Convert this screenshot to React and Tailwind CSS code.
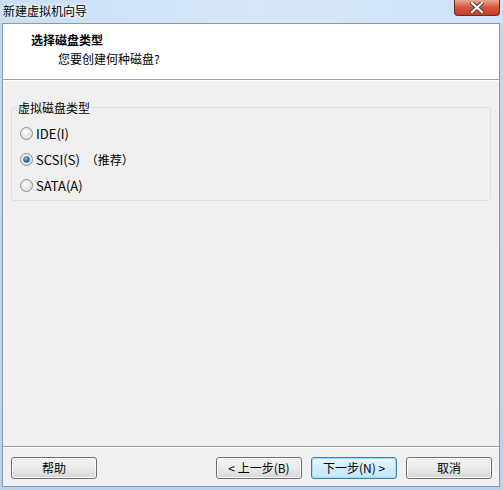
import React from "react";

const font = { fontFamily: '"Noto Sans CJK SC", "Liberation Sans", sans-serif' };

function Radio({ checked }) {
  return (
    <svg width="13" height="13" viewBox="0 0 13 13" className="shrink-0">
      <defs>
        <radialGradient id={checked ? "rc" : "ru"} cx="0.4" cy="0.35" r="0.7">
          <stop offset="0" stopColor="#ffffff" />
          <stop offset="1" stopColor="#d6d6d6" />
        </radialGradient>
        <radialGradient id="dot" cx="0.4" cy="0.35" r="0.7">
          <stop offset="0" stopColor="#8fd3f5" />
          <stop offset="0.6" stopColor="#1b74b0" />
          <stop offset="1" stopColor="#0f4f85" />
        </radialGradient>
      </defs>
      <circle cx="6.5" cy="6.5" r="6" fill={`url(#${checked ? "rc" : "ru"})`} stroke="#8f8f8f" strokeWidth="1" />
      <circle cx="6.5" cy="6.5" r="4.3" fill="none" stroke="#e8e8e8" strokeWidth="0.8" />
      {checked && <circle cx="6.5" cy="6.5" r="3" fill="url(#dot)" stroke="#2a5d84" strokeWidth="0.5" />}
    </svg>
  );
}

function Btn({ children, focused }) {
  return (
    <div
      className={`w-[86px] h-[22px] rounded-[3px] border flex items-center justify-center text-[12px] text-black ${
        focused
          ? "border-[#3c7fb1] bg-gradient-to-b from-[#eaf6fd] to-[#bee6fd] shadow-[inset_0_0_0_1px_#a7d9f5]"
          : "border-[#707070] bg-gradient-to-b from-[#f2f2f2] via-[#ebebeb] to-[#d5d5d5] shadow-[inset_0_0_0_1px_#fcfcfc]"
      }`}
    >
      {children}
    </div>
  );
}

export default function App() {
  return (
    <div
      className="w-[503px] h-[490px] flex flex-col bg-gradient-to-b from-[#c2d8ef] to-[#b9d1ea] overflow-hidden"
      style={font}
    >
      {/* title bar */}
      <div className="h-[23px] flex items-start justify-between bg-gradient-to-r from-[#c9def4] via-[#d6e6f8] to-[#cfe2f6]">
        <div className="pl-[3px] pt-[3px] text-[12px] leading-[16px] text-black [text-shadow:0_0_6px_#ffffff,0_0_3px_#ffffff]">
          新建虚拟机向导
        </div>
        <div className="mr-[3px] w-[46px] h-[16px] rounded-b-[4px] border border-t-0 border-[#6f2a20] bg-gradient-to-b from-[#e8a795] via-[#d3543b] to-[#c33f27] flex items-center justify-center">
          <svg width="14" height="11" viewBox="0 0 14 11">
            <path d="M2 1 L7 5.5 L12 1 M2 10 L7 5.5 L12 10" stroke="#3d3d3d" strokeWidth="4" fill="none" strokeLinecap="square" />
            <path d="M2 1 L7 5.5 L12 1 M2 10 L7 5.5 L12 10" stroke="#ffffff" strokeWidth="2.2" fill="none" strokeLinecap="square" />
          </svg>
        </div>
      </div>

      {/* client area */}
      <div className="flex-1 ml-[2px] mr-[3px] mb-[3px] border border-[#8a9aab] bg-[#f0f0f0] flex flex-col">
        {/* header */}
        <div className="h-[56px] bg-white border-b border-[#a0a0a0] flex flex-col">
          <div className="pl-[28px] pt-[8px] text-[12px] leading-[16px] font-bold text-black">选择磁盘类型</div>
          <div className="pl-[55px] pt-[3px] text-[12px] leading-[16px] text-black">您要创建何种磁盘?</div>
        </div>
        <div className="h-px bg-white" />

        {/* body */}
        <div className="flex-1 flex flex-col px-[8px] pt-[26px]">
          <div className="relative h-[94px] border border-[#d5dfe5] rounded-[3px] flex flex-col pt-[19px] pl-[8px] gap-[13px] text-[13px] leading-[13px] text-black">
            <div className="absolute left-[5px] -top-[8px] bg-[#f0f0f0] px-[1px] text-[12px] leading-[16px]">虚拟磁盘类型</div>
            <div className="h-[13px] flex items-center gap-[3px]">
              <Radio />
              <span>IDE(I)</span>
            </div>
            <div className="h-[13px] flex items-center gap-[3px]">
              <Radio checked />
              <span>SCSI(S)</span>
              <span className="ml-[3px] text-[12px]">（推荐）</span>
            </div>
            <div className="h-[13px] flex items-center gap-[3px]">
              <Radio />
              <span>SATA(A)</span>
            </div>
          </div>
        </div>

        {/* bottom */}
        <div className="h-px bg-[#a0a0a0]" />
        <div className="h-px bg-white" />
        <div className="h-[38px] flex items-start pt-[9px] pl-[8px] pr-[7px]">
          <Btn>帮助</Btn>
          <div className="flex-1" />
          <div className="flex gap-[9px]">
            <Btn>&lt; 上一步(B)</Btn>
            <Btn focused>下一步(N) &gt;</Btn>
            <Btn>取消</Btn>
          </div>
        </div>
      </div>
    </div>
  );
}
